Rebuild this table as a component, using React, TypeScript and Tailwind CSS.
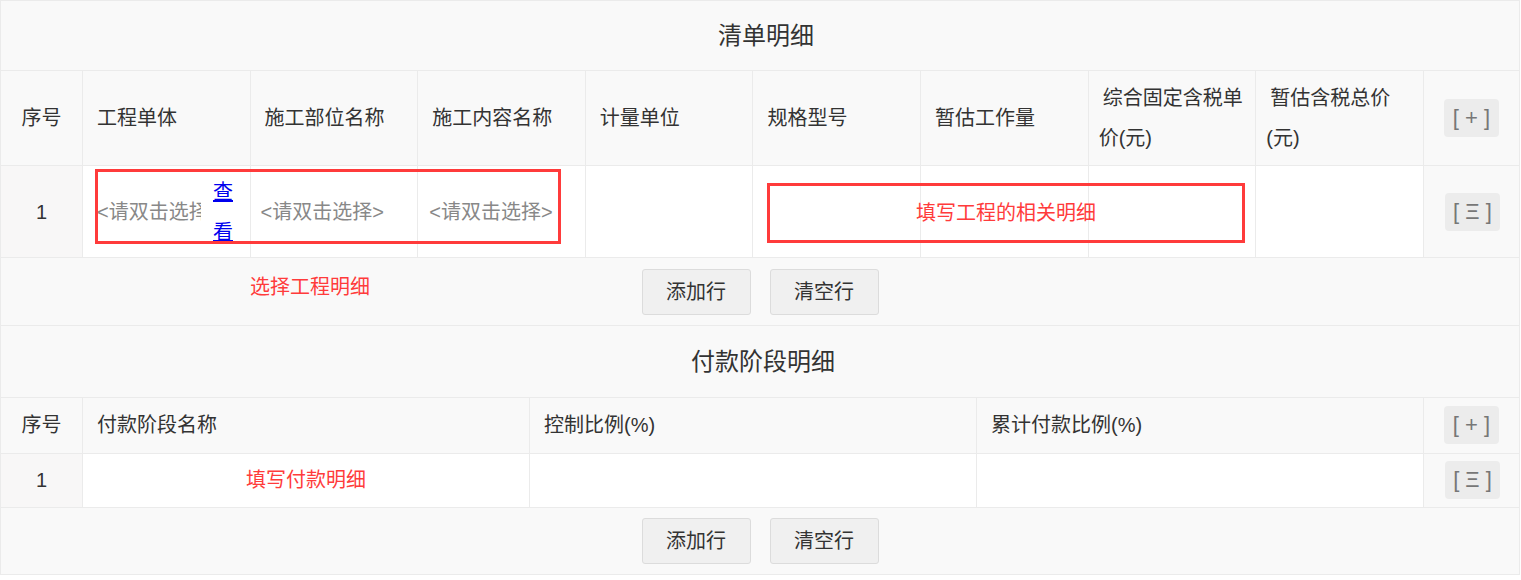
const detailCols = [
  "工程单体",
  "施工部位名称",
  "施工内容名称",
  "计量单位",
  "规格型号",
  "暂估工作量",
  "综合固定含税单价(元)",
  "暂估含税总价(元)",
];

const payCols = ["付款阶段名称", "控制比例(%)", "累计付款比例(%)"];

function IconBtn({ label }: { label: string }) {
  return (
    <span className="inline-flex h-[38px] w-[55px] items-center justify-center whitespace-pre rounded-[4px] bg-[#ececec] text-[22px] leading-none text-[#777]">
      {label}
    </span>
  );
}

function Buttons() {
  return (
    <div className="flex items-center justify-center gap-[19px]">
      <button className="h-[46px] w-[109px] rounded-[3px] border border-[#dcdcdc] bg-[#f0f0f0] text-[20px] text-[#333]">
        添加行
      </button>
      <button className="h-[46px] w-[109px] rounded-[3px] border border-[#dcdcdc] bg-[#f0f0f0] text-[20px] text-[#333]">
        清空行
      </button>
    </div>
  );
}

const td = "border border-[#ebebeb]";

export default function App() {
  return (
    <div className="relative w-[1520px] bg-white font-[family-name:'Liberation_Sans','Noto_Sans_CJK_SC',sans-serif] text-[20px] text-[#333]">
      {/* 清单明细 */}
      <table className="w-full table-fixed border-collapse bg-[#f9f9f9]">
        <colgroup>
          <col className="w-[82px]" />
          {detailCols.map((c) => (
            <col key={c} />
          ))}
          <col className="w-[96px]" />
        </colgroup>
        <tbody>
          <tr className="h-[70px]">
            <td colSpan={10} className={`${td} pl-[12px] text-center text-[24px]`}>
              清单明细
            </td>
          </tr>
          <tr className="h-[95px] leading-[40px]">
            <td className={`${td} text-center`}>序号</td>
            {detailCols.map((c) => (
              <td key={c} className={`${td} px-[10px] indent-[4px]`}>
                {c}
              </td>
            ))}
            <td className={`${td} text-center`}>
              <IconBtn label="[ + ]" />
            </td>
          </tr>
          <tr className="h-[92px] bg-white leading-[40px]">
            <td className={`${td} bg-[#f8f7f7] text-center`}>1</td>
            <td className={`${td} pl-[14px]`}>
              <div className="flex items-center">
                <span className="w-[104px] overflow-hidden whitespace-nowrap text-[#888]">
                  &lt;请双击选择&gt;
                </span>
                <a href="#" className="ml-[12px] w-[20px] break-all text-[#0000ee] underline">
                  查看
                </a>
              </div>
            </td>
            <td className={`${td} pl-[10px] text-[#888]`}>&lt;请双击选择&gt;</td>
            <td className={`${td} pl-[11px] text-[#888]`}>&lt;请双击选择&gt;</td>
            <td className={td}></td>
            <td className={td}></td>
            <td className={td}></td>
            <td className={td}></td>
            <td className={td}></td>
            <td className={`${td} bg-[#f9f9f9] pl-[2px] text-center`}>
              <IconBtn label="[ Ξ ]" />
            </td>
          </tr>
          <tr className="h-[68px]">
            <td colSpan={10} className={td}>
              <Buttons />
            </td>
          </tr>
          <tr className="h-[72px]">
            <td colSpan={10} className={`${td} pl-[6px] text-center text-[24px]`}>
              付款阶段明细
            </td>
          </tr>
        </tbody>
      </table>

      {/* 付款阶段明细 */}
      <table className="w-full table-fixed border-collapse bg-[#f9f9f9]">
        <colgroup>
          <col className="w-[82px]" />
          {payCols.map((c) => (
            <col key={c} />
          ))}
          <col className="w-[96px]" />
        </colgroup>
        <tbody>
          <tr className="h-[55px]">
            <td className={`${td} border-t-0 text-center`}>序号</td>
            {payCols.map((c) => (
              <td key={c} className={`${td} border-t-0 px-[10px] indent-[4px]`}>
                {c}
              </td>
            ))}
            <td className={`${td} border-t-0 text-center`}>
              <IconBtn label="[ + ]" />
            </td>
          </tr>
          <tr className="h-[54px] bg-white">
            <td className={`${td} bg-[#f8f7f7] text-center`}>1</td>
            <td className={`${td} text-center text-[#ff3b3b]`}>填写付款明细</td>
            <td className={td}></td>
            <td className={td}></td>
            <td className={`${td} bg-[#f9f9f9] pl-[2px] text-center`}>
              <IconBtn label="[ Ξ ]" />
            </td>
          </tr>
          <tr className="h-[67px]">
            <td colSpan={5} className={td}>
              <Buttons />
            </td>
          </tr>
        </tbody>
      </table>

      {/* annotations */}
      <div className="absolute left-[95px] top-[169px] h-[75px] w-[466px] border-[3px] border-[#ff3b3b]" />
      <div className="absolute left-[767px] top-[183px] flex h-[60px] w-[478px] items-center justify-center border-[3px] border-[#ff3b3b] text-[#ff3b3b]">
        填写工程的相关明细
      </div>
      <div className="absolute left-[250px] top-[272px] text-[#ff3b3b]">选择工程明细</div>
    </div>
  );
}
